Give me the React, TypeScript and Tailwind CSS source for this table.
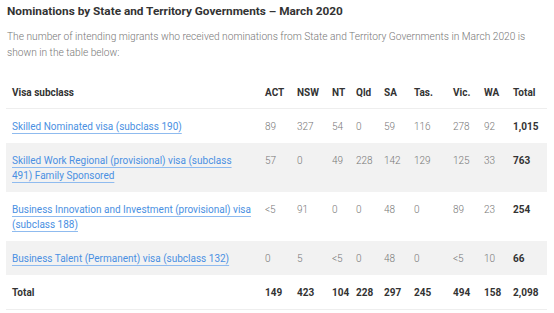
const cols = ["ACT", "NSW", "NT", "Qld", "SA", "Tas.", "Vic.", "WA"];

const rows = [
  { name: "Skilled Nominated visa (subclass 190)", v: ["89", "327", "54", "0", "59", "116", "278", "92"], total: "1,015" },
  { name: "Skilled Work Regional (provisional) visa (subclass 491) Family Sponsored", v: ["57", "0", "49", "228", "142", "129", "125", "33"], total: "763" },
  { name: "Business Innovation and Investment (provisional) visa (subclass 188)", v: ["<5", "91", "0", "0", "48", "0", "89", "23"], total: "254" },
  { name: "Business Talent (Permanent) visa (subclass 132)", v: ["0", "5", "<5", "0", "48", "0", "<5", "10"], total: "66" },
];

const totals = ["149", "423", "104", "228", "297", "245", "494", "158"];

export default function App() {
  return (
    <div className="h-[313px] w-[554px] overflow-hidden bg-white px-[6px] pt-[3px] font-['Roboto',sans-serif]">
      <h2 className="pl-px text-[11.8px] font-bold leading-[16px] text-[#333]">
        Nominations by State and Territory Governments – March 2020
      </h2>
      <p className="mt-[10px] pl-px text-[10.2px] font-light leading-[16px] text-[#777]">
        The number of intending migrants who received nominations from State and Territory Governments in March 2020 is
        shown in the table below:
      </p>

      <table className="mt-[15px] w-[541px] table-fixed border-collapse text-[10px] leading-[15px]">
        <colgroup>
          <col className="w-[253px]" />
          <col className="w-[32px]" />
          <col className="w-[35px]" />
          <col className="w-[24px]" />
          <col className="w-[28px]" />
          <col className="w-[30px]" />
          <col className="w-[39px]" />
          <col className="w-[31px]" />
          <col className="w-[29px]" />
          <col className="w-[40px]" />
        </colgroup>
        <thead>
          <tr className="border-b border-[#eee] text-left text-[#333]">
            <th className="px-[6px] pb-[8px] pt-[9px] font-bold">Visa subclass</th>
            {cols.map((c) => (
              <th key={c} className="pb-[8px] pl-[6px] pt-[9px] font-bold">
                {c}
              </th>
            ))}
            <th className="pb-[8px] pl-[6px] pt-[9px] font-bold">Total</th>
          </tr>
        </thead>
        <tbody>
          {rows.map((r, i) => (
            <tr key={r.name} className={i % 2 === 1 ? "bg-[#f2f2f2]" : "bg-white"}>
              <td className="px-[6px] pb-[9px] pt-[10px] align-top">
                <a
                  href="#"
                  className="text-[#4a90e2] underline decoration-[#8fbbef] underline-offset-[3px]"
                >
                  {r.name}
                </a>
              </td>
              {r.v.map((x, j) => (
                <td key={j} className="pb-[9px] pl-[6px] pt-[10px] align-top font-light text-[#777]">
                  {x}
                </td>
              ))}
              <td className="pb-[9px] pl-[6px] pt-[10px] align-top font-bold text-[#333]">{r.total}</td>
            </tr>
          ))}
          <tr className="border-b border-[#eee] font-bold text-[#333]">
            <td className="px-[6px] pb-[9px] pt-[10px]">Total</td>
            {totals.map((x, j) => (
              <td key={j} className="pb-[9px] pl-[6px] pt-[10px]">
                {x}
              </td>
            ))}
            <td className="pb-[9px] pl-[6px] pt-[10px]">2,098</td>
          </tr>
        </tbody>
      </table>
    </div>
  );
}
